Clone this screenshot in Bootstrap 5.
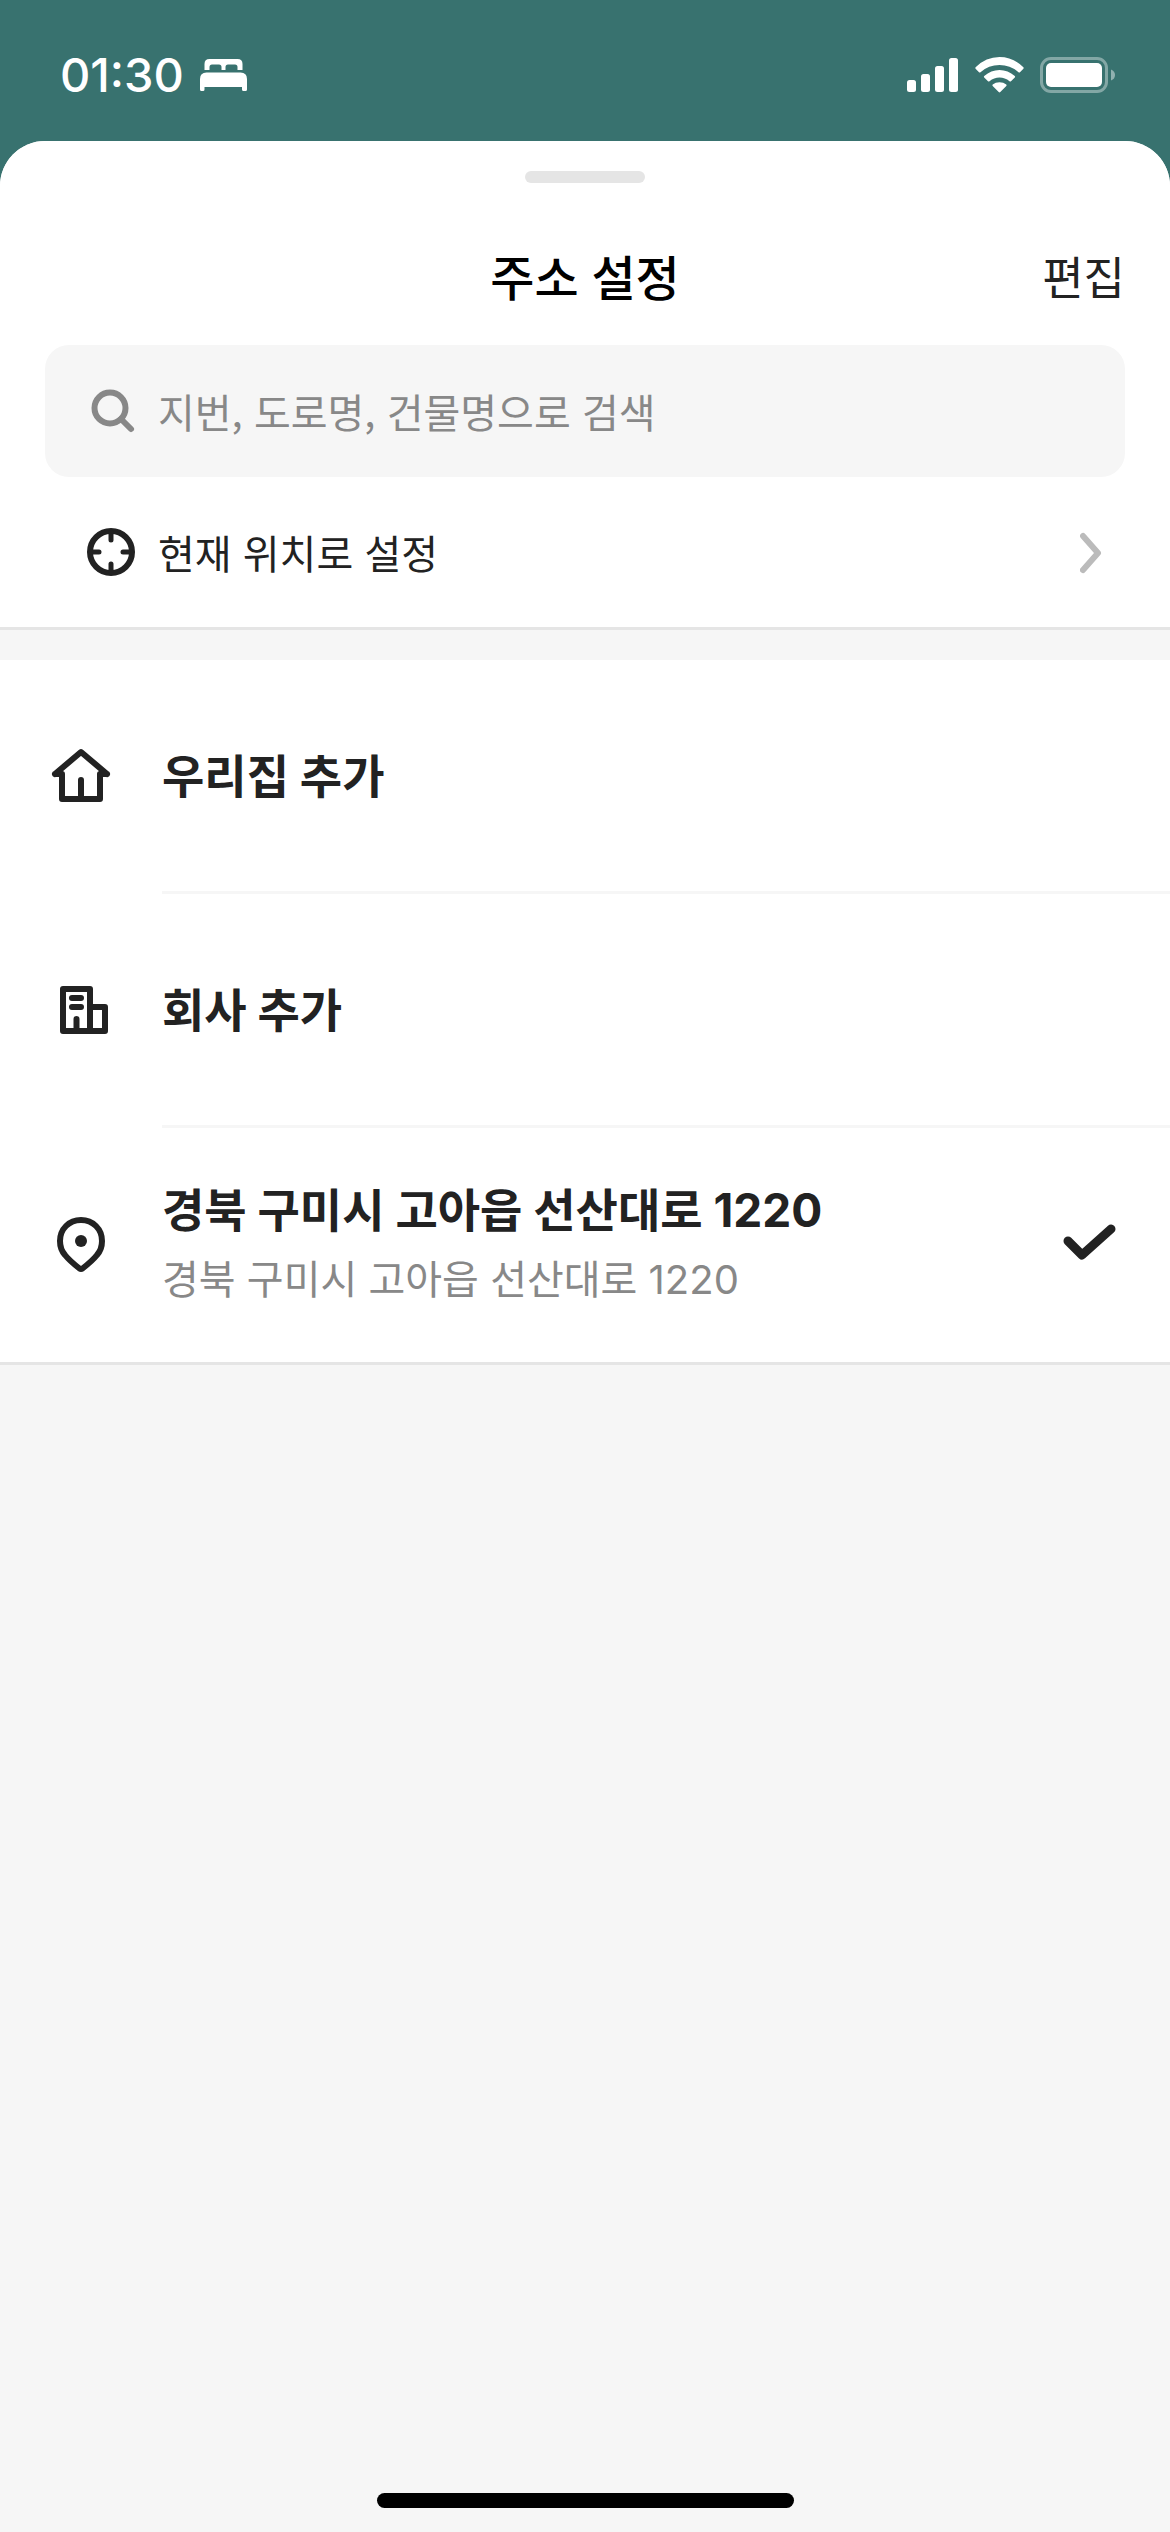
<!DOCTYPE html>
<html lang="ko">
<head>
<meta charset="utf-8">
<meta name="viewport" content="width=device-width, initial-scale=1">
<title>주소 설정</title>
<link href="https://cdn.jsdelivr.net/npm/bootstrap@5.3.0/dist/css/bootstrap.min.css" rel="stylesheet">
<style>
  :root { --ink: #222; --muted: #888; --line: #e5e5e5; --surface: #f6f6f6; --teal: #38726f; }
  body { background: var(--teal); color: var(--ink); font-family: Inter, "Noto Sans CJK KR", sans-serif; font-size: 40px; line-height: 60px; }
  svg { display: block; flex: none; }
  .status-bar { height: 141px; padding: 8px 54px 0 60px; }
  .clock { font-size: 47px; font-weight: 500; }
  .sheet { background: var(--surface); border-radius: 45px 45px 0 0; overflow: hidden; }
  .grabber { width: 120px; height: 12px; border-radius: 6px; background: var(--line); }
  .sheet-top { padding-top: 30px; border-bottom: 3px solid var(--line); }
  .sheet-header { height: 134px; margin-top: 28px; padding: 2px 45px 0; display: grid; grid-template-columns: 1fr auto 1fr; align-items: center; }
  .sheet-title { font-size: 48px; font-weight: 500; line-height: 60px; color: #000; }
  .edit-btn { font-size: 45px; line-height: 60px; color: var(--ink); }
  .search-box { height: 132px; margin: 0 45px; padding: 0 42px; border-radius: 24px; background: var(--surface); color: var(--muted); gap: 18px; }
  .search-box input, .search-box input:focus { background: transparent; font-family: "Noto Sans CJK KR", sans-serif; font-size: 40px; line-height: 60px; box-shadow: none; color: var(--ink); }
  .search-box input::placeholder { color: var(--muted); opacity: 1; }
  .locate-btn { height: 150px; padding: 0 60px 0 84px; gap: 18px; color: var(--ink); font-family: "Noto Sans CJK KR", sans-serif; font-size: 40px; line-height: 60px; }
  .places { margin-top: 30px; border-bottom: 3px solid var(--line); }
  .place { color: var(--ink); }
  .place-icon { width: 162px; padding: 0 0 3px 48px; }
  .place-body { padding: 47px 48px 47px 0; min-height: 234px; }
  .place:not(:last-child) .place-body { border-bottom: 3px solid var(--surface); }
  .place-name { font-size: 46px; font-weight: 700; line-height: 70px; }
  .place-detail { font-size: 40px; line-height: 70px; color: var(--muted); }
  .home-bar { width: 417px; height: 15px; border-radius: 8px; background: #000; margin-bottom: 24px; }
</style>
</head>
<body>
<div class="min-vh-100 d-flex flex-column">
  <header class="status-bar d-flex align-items-center justify-content-between text-white">
    <div class="d-flex align-items-center gap-3">
      <span class="clock">01:30</span>
      <svg width="47" height="32" viewBox="0 0 47 32" fill="#fff" aria-hidden="true">
        <path d="M4.500 11V5Q4.500 0 9.500 0H37.500Q42.500 0 42.500 5V11H37.500V8Q37.500 5.500 35 5.500H28Q25.500 5.500 25.500 8V11H21.500V8Q21.500 5.500 19 5.500H12Q9.500 5.500 9.500 8V11Z"/>
        <path d="M0 20Q0 13.500 6.500 13.500H40.500Q47 13.500 47 20V30.500Q47 32 45.500 32H43.500Q42 32 42 30.500V28H4.500V30.500Q4.500 32 3 32H1.500Q0 32 0 30.500Z"/>
      </svg>
    </div>
    <div class="d-flex align-items-center gap-3">
      <svg width="52" height="36" viewBox="0 0 52 36" fill="#fff" aria-hidden="true">
        <rect x="0" y="23" width="9" height="12" rx="2.500"/><rect x="14" y="17" width="9" height="18" rx="2.500"/><rect x="28" y="9" width="9" height="26" rx="2.500"/><rect x="42" y="1" width="9" height="34" rx="2.500"/>
      </svg>
      <svg width="49" height="36" viewBox="0 0 49 36" fill="#fff" aria-hidden="true">
        <path d="M.6 10.200Q0 11 .6 11.700L4 15.200Q4.700 15.900 5.500 15.200Q13.500 8 24.500 8T43.500 15.200Q44.300 15.900 45 15.200L48.400 11.700Q49 11 48.400 10.200Q38 0 24.500 0T.6 10.200Z"/>
        <path d="M9.200 19Q8.500 19.700 9.200 20.400L13 24.200Q13.700 24.900 14.500 24.200Q19 20.500 24.500 20.500T34.500 24.200Q35.300 24.900 36 24.200L39.800 20.400Q40.500 19.700 39.800 19Q33 13 24.500 13T9.200 19Z"/>
        <path d="M17.700 27.500Q17 28.200 17.700 28.900L23.700 35Q24.500 35.800 25.300 35L31.300 28.900Q32 28.200 31.300 27.500Q28.500 25.200 24.500 25.200T17.700 27.500Z"/>
      </svg>
      <svg width="76" height="36" viewBox="0 0 76 36" aria-hidden="true">
        <rect x="1.500" y="1.500" width="65" height="33" rx="9.500" fill="none" stroke="#fff" stroke-opacity=".38" stroke-width="3"/>
        <rect x="6" y="6" width="56" height="24" rx="5" fill="#fff"/>
        <path d="M71 12.500Q75 14 75 18T71 23.500Z" fill="#fff" fill-opacity=".45"/>
      </svg>
    </div>
  </header>

  <main class="sheet flex-grow-1 d-flex flex-column">
    <section class="sheet-top bg-white">
      <div class="grabber mx-auto"></div>
      <div class="sheet-header">
        <span></span>
        <h1 class="sheet-title m-0">주소 설정</h1>
        <button type="button" class="edit-btn btn p-0 border-0 text-end">편집</button>
      </div>
      <label class="search-box d-flex align-items-center" for="address-search">
        <svg width="53" height="50" viewBox="0 0 53 50" fill="none" stroke="currentColor" stroke-width="6" stroke-linecap="round" aria-hidden="true">
          <circle cx="23" cy="22" r="15.500"/><path d="M34 33L44 43"/>
        </svg>
        <input id="address-search" type="text" class="form-control border-0 p-0" placeholder="지번, 도로명, 건물명으로 검색">
      </label>
      <button type="button" class="locate-btn btn w-100 border-0 rounded-0 d-flex align-items-center text-start">
        <svg width="56" height="54" viewBox="0 0 56 54" fill="none" stroke="#222" stroke-linecap="round" aria-hidden="true">
          <circle cx="27" cy="27" r="21" stroke-width="6"/>
          <path d="M27 7V15M27 39V47M7 27H15M39 27H47" stroke-width="5"/>
        </svg>
        <span class="flex-grow-1">현재 위치로 설정</span>
        <svg width="30" height="48" viewBox="0 0 30 48" fill="none" stroke="#bbb" stroke-width="6" stroke-linecap="round" stroke-linejoin="round" aria-hidden="true"><path d="M3 8L18 25L3 42"/></svg>
      </button>
    </section>

    <nav class="places bg-white" aria-label="저장된 주소">
      <a href="#" class="place d-flex align-items-stretch text-decoration-none">
        <span class="place-icon d-flex align-items-center">
          <svg width="66" height="66" viewBox="0 0 66 66" fill="none" stroke="#222" stroke-width="6" stroke-linecap="round" stroke-linejoin="round" aria-hidden="true">
            <path d="M7 31L33 9L59 31M7 31H14V56H52V31H59M33 37V56"/>
          </svg>
        </span>
        <span class="place-body flex-grow-1 d-flex align-items-center"><span class="place-name">우리집 추가</span></span>
      </a>
      <a href="#" class="place d-flex align-items-stretch text-decoration-none">
        <span class="place-icon d-flex align-items-center">
          <svg width="66" height="66" viewBox="0 0 66 66" fill="none" stroke="#222" stroke-width="6" stroke-linecap="round" stroke-linejoin="round" aria-hidden="true">
            <path d="M15 12H42V54H15ZM42 30H57V54H42M24 21H33M24 30H33M28.500 42V54"/>
          </svg>
        </span>
        <span class="place-body flex-grow-1 d-flex align-items-center"><span class="place-name">회사 추가</span></span>
      </a>
      <a href="#" class="place d-flex align-items-stretch text-decoration-none" aria-current="true">
        <span class="place-icon d-flex align-items-center">
          <svg width="66" height="66" viewBox="0 0 66 66" fill="none" stroke="#222" stroke-width="6" stroke-linejoin="round" aria-hidden="true">
            <path d="M33 9C21 9 12 18 12 30C12 35 13.500 40 17 44C21 49 27 54 31.500 57.500Q33 58.500 34.500 57.500C39 54 45 49 49 44C52.500 40 54 35 54 30C54 18 45 9 33 9Z"/>
            <circle cx="33" cy="30" r="6" fill="#222" stroke="none"/>
          </svg>
        </span>
        <span class="place-body flex-grow-1 d-flex align-items-center justify-content-between">
          <span class="d-flex flex-column">
            <span class="place-name">경북 구미시 고아읍 선산대로 1220</span>
            <span class="place-detail">경북 구미시 고아읍 선산대로 1220</span>
          </span>
          <svg width="60" height="48" viewBox="0 0 60 48" fill="none" stroke="#222" stroke-width="9" stroke-linecap="round" stroke-linejoin="round" aria-hidden="true"><path d="M6 20L20 34L49 8"/></svg>
        </span>
      </a>
    </nav>

    <div class="home-bar mt-auto mx-auto"></div>
  </main>
</div>
<script src="https://cdn.jsdelivr.net/npm/bootstrap@5.3.0/dist/js/bootstrap.bundle.min.js"></script>
</body>
</html>
